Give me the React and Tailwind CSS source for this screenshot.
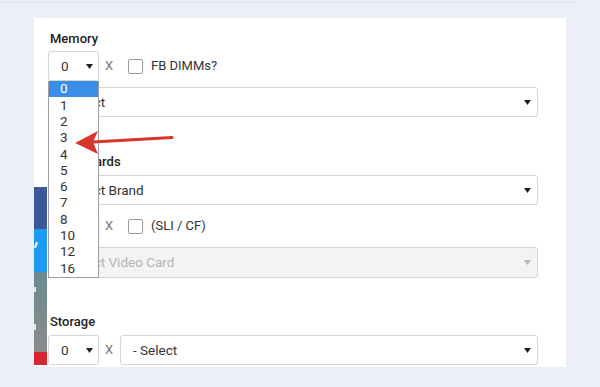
import React from "react";

function Caret({ disabled }) {
  return (
    <svg width="7" height="5" viewBox="0 0 7 5" className="shrink-0">
      <path d="M0 0 L7 0 L3.5 5 Z" fill={disabled ? "#b5b5b5" : "#222"} />
    </svg>
  );
}

function Select({ text, className = "", disabled = false }) {
  return (
    <div
      className={`h-[30px] flex items-center justify-between rounded-[3px] border border-[#d6d6d6] shadow-[0_0_2px_rgba(0,0,0,0.06)] pl-[12px] text-[13.5px] ${
        disabled ? "bg-[#f3f3f3] text-[#b3b3b3]" : "bg-white text-[#333]"
      } ${className}`}
    >
      <span>{text}</span>
      <Caret disabled={disabled} />
    </div>
  );
}

function Check({ label }) {
  return (
    <div className="flex items-center ml-[9px]">
      <div className="w-[15px] h-[15px] rounded-[2px] border border-[#9a9a9a] bg-white" />
      <span className="ml-[8px] text-[13px] text-[#333]">{label}</span>
    </div>
  );
}

function QtyRow({ children }) {
  return (
    <div className="flex items-center h-[30px]">
      <Select text="0" className="w-[51px] pr-[5px]" />
      <span className="w-[20px] text-center text-[13px] text-[#777]">X</span>
      {children}
    </div>
  );
}

export default function App() {
  const items = ["0", "1", "2", "3", "4", "5", "6", "7", "8", "10", "12", "16"];
  return (
    <div className="relative w-[600px] h-[387px] overflow-hidden bg-[#edf1f7] font-['Roboto',sans-serif]">
      <div className="h-[2px] w-[575px] mt-px bg-[#e1e6ed]" />
      <div className="ml-[34px] mt-[15px] w-[532px] h-[349px] overflow-hidden bg-white pl-[14px] pr-[28px] pt-[12px] shadow-[0_0_3px_rgba(0,0,0,0.04)]">
        <div className="pl-[2px] text-[13px] font-medium leading-[18px] text-[#222]">Memory</div>
        <div className="mt-[3px]">
          <QtyRow>
            <Check label="FB DIMMs?" />
          </QtyRow>
        </div>
        <Select text="- Select" className="mt-[6px] pr-[6px]" />

        <div className="mt-[36px] pl-[2px] text-[13px] font-medium leading-[18px] text-[#222]">
          Video Cards
        </div>
        <Select text="- Select Brand" className="mt-[4px] pr-[6px]" />
        <div className="mt-[6px]">
          <QtyRow>
            <Check label="(SLI / CF)" />
          </QtyRow>
        </div>
        <Select text="- Select Video Card" disabled className="mt-[6px] h-[31px] pr-[6px]" />

        <div className="mt-[35px] pl-[2px] text-[13px] font-medium leading-[18px] text-[#222]">
          Storage
        </div>
        <div className="mt-[4px]">
          <QtyRow>
            <Select text="- Select" className="flex-1 ml-[1px] pr-[6px]" />
          </QtyRow>
        </div>
      </div>

      {/* social share strip */}
      <div className="absolute left-[34px] top-[187px] w-[13px] flex flex-col">
        <div className="h-[42px] bg-[#3b5998]" />
        <div className="relative h-[43px] bg-[#1e9bf0]">
          <div className="absolute left-[1px] top-[13px] w-[2px] h-[6px] bg-white rotate-[20deg]" />
        </div>
        <div className="relative h-[80px] bg-gradient-to-b from-[#6a8b91] to-[#8a8a8a]">
          <div className="absolute left-0 top-[15px] w-[2px] h-[5px] bg-white/80" />
          <div className="absolute left-0 top-[52px] w-[2px] h-[6px] bg-white/80" />
        </div>
        <div className="h-[13px] bg-[#d3262d]" />
      </div>

      {/* open dropdown list */}
      <div className="absolute left-[48px] top-[81px] w-[51px] h-[197px] bg-white border border-t-0 border-[#9e9e9e] flex flex-col">
        {items.map((it, i) => (
          <div
            key={it}
            className={`h-[16.3px] flex items-center pl-[11px] text-[13.5px] leading-none ${
              i === 0 ? "bg-[#3a8ee8] text-white" : "text-[#333]"
            }`}
          >
            {it}
          </div>
        ))}
      </div>

      {/* red arrow */}
      <svg className="absolute left-0 top-0" width="600" height="387" viewBox="0 0 600 387">
        <line x1="93" y1="142" x2="172" y2="137.5" stroke="#d8352c" strokeWidth="3" strokeLinecap="round" />
        <path d="M75 143 L98 131 L93 142 L98 154 Z" fill="#d8352c" />
      </svg>
    </div>
  );
}
